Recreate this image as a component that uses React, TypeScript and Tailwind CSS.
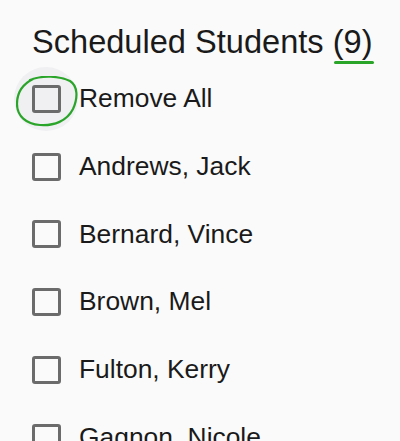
import React from "react";

const students = [
  "Andrews, Jack",
  "Bernard, Vince",
  "Brown, Mel",
  "Fulton, Kerry",
  "Gagnon, Nicole",
];

function Box() {
  return (
    <div className="w-[29px] h-[28px] shrink-0 rounded-[3px] border-[3px] border-[#6b6b6b] bg-transparent" />
  );
}

export default function App() {
  return (
    <div
      className="w-[400px] h-[441px] overflow-hidden bg-[#fafafa] text-[#1a1a1a]"
      style={{ fontFamily: '"Liberation Sans", Arial, sans-serif' }}
    >
      <div className="pl-[32px] pt-[22px]">
        <h1 className="text-[32.6px] leading-[40px] font-normal whitespace-nowrap">
          Scheduled Students{" "}
          <span className="relative inline-block">
            (9)
            <span className="absolute left-[1px] right-[-1px] top-[39px] h-[3px] rounded-full bg-[#2aa52a]" />
          </span>
        </h1>
      </div>
      <div className="pl-[32px] mt-[3px]">
        <div className="relative flex items-center h-[67.75px]">
          <div className="absolute left-[-18px] top-[2px] w-[64px] h-[64px] rounded-full bg-[#f0f0f3]" />
          <div className="relative">
            <Box />
          </div>
          <span className="relative ml-[18px] text-[26.4px] whitespace-nowrap">Remove All</span>
          <svg
            className="absolute left-[-16px] top-[11px]"
            width="64"
            height="54"
            viewBox="0 0 64 54"
          >
            <path
              d="M14 4 C26 -1 44 0 54 5 C62 10 62 22 57 33 C51 45 38 50 24 49 C10 48 1 40 1 28 C1 16 7 8 17 3"
              fill="none"
              stroke="#2aa52a"
              strokeWidth="2.2"
              strokeLinecap="round"
            />
          </svg>
        </div>
        {students.map((s) => (
          <div key={s} className="flex items-center h-[67.75px]">
            <Box />
            <span className="ml-[18px] text-[26.4px] whitespace-nowrap">{s}</span>
          </div>
        ))}
      </div>
    </div>
  );
}
